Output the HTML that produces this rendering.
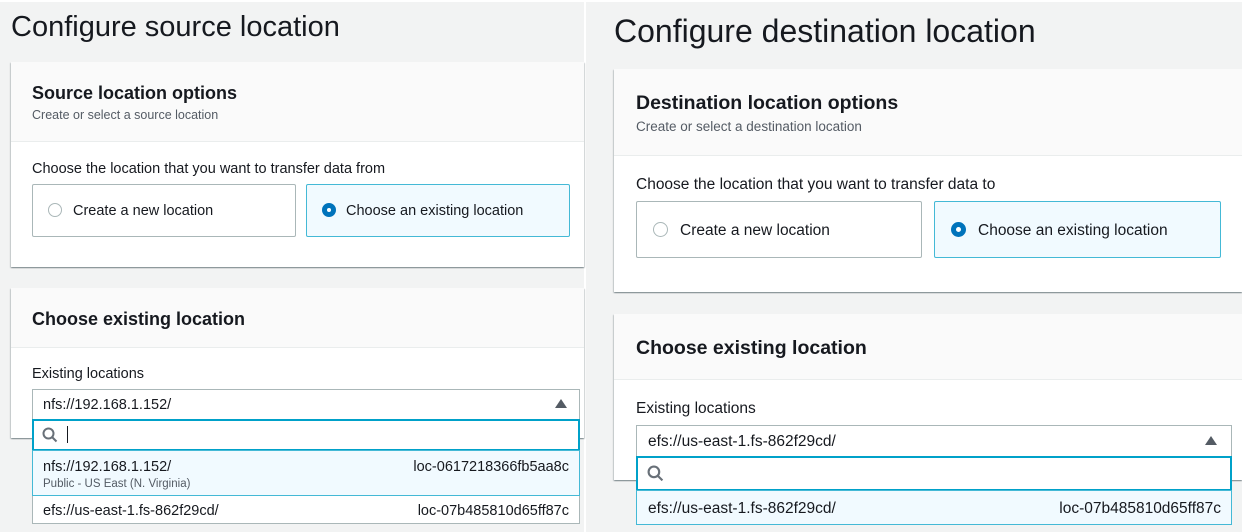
<!DOCTYPE html>
<html><head><style>
*{box-sizing:border-box;margin:0;padding:0}
body{width:1242px;height:532px;background:#fff;position:relative;overflow:hidden;font-family:"Liberation Sans",sans-serif;color:#16191f}
.a{position:absolute;white-space:nowrap}
.bg{background:#f2f3f3}
.card{position:absolute;background:#fff;box-shadow:0 1px 1px 0 rgba(0,28,36,.3),1px 1px 1px 0 rgba(0,28,36,.15),-1px 1px 1px 0 rgba(0,28,36,.15)}
.hd{position:absolute;left:0;right:0;top:0;background:#fafafa;border-bottom:1px solid #eaeded}
.rb{position:absolute;border:1px solid #aab7b8;border-radius:2px;background:#fff}
.rb.sel{border-color:#44b9d6;background:#f1faff}
.rd{position:absolute;border:1px solid #aab7b8;border-radius:50%;background:#fff}
.rd.on{border:5px solid #0073bb}
.box{position:absolute;border:1px solid #aab7b8;background:#fff}
.srch{position:absolute;border:2px solid #00a1c9;background:#fff}
.opt{position:absolute;border:1px solid #aab7b8;background:#fff}
.opt.hi{background:#f1faff;border:1px solid #44b9d6}
.tri{position:absolute;width:0;height:0;border-left:6px solid transparent;border-right:6px solid transparent;border-bottom:9px solid #545b64}
</style></head><body>
<div class="a bg" style="left:0;top:2px;width:584px;height:530px"></div>
<div class="a" style="left:11px;top:11px;font-size:29px;">Configure source location</div>
<div class="card" style="left:11px;top:62px;width:573px;height:205px">
  <div class="hd" style="height:80px"></div>
  <div class="a" style="left:21px;top:21px;font-size:18px;font-weight:bold">Source location options</div>
  <div class="a" style="left:21px;top:46px;font-size:12.5px;color:#545b64">Create or select a source location</div>
  <div class="a" style="left:21px;top:99px;font-size:14.5px">Choose the location that you want to transfer data from</div>
  <div class="rb" style="left:21px;top:122px;width:264px;height:53px"></div>
  <div class="rd" style="left:37px;top:141px;width:14px;height:14px"></div>
  <div class="a" style="left:62px;top:141px;font-size:14.5px">Create a new location</div>
  <div class="rb sel" style="left:295px;top:122px;width:264px;height:53px"></div>
  <div class="rd on" style="left:311px;top:141px;width:14px;height:14px"></div>
  <div class="a" style="left:335px;top:141px;font-size:14.5px">Choose an existing location</div>
</div>
<div class="card" style="left:11px;top:288px;width:573px;height:150px">
  <div class="hd" style="height:60px"></div>
  <div class="a" style="left:21px;top:21px;font-size:18px;font-weight:bold">Choose existing location</div>
  <div class="a" style="left:21px;top:78px;font-size:14.5px">Existing locations</div>
</div>
<div class="box" style="left:32px;top:389px;width:548px;height:31px"></div>
<div class="a" style="left:43px;top:397px;font-size:14.5px">nfs://192.168.1.152/</div>
<div class="tri" style="left:555px;top:399px"></div>
<div class="srch" style="left:32px;top:419px;width:548px;height:32px"></div>
<svg class="a" style="left:42px;top:427px" width="16" height="16" viewBox="0 0 16 16"><circle cx="6.5" cy="6.5" r="5" fill="none" stroke="#687078" stroke-width="2"/><path d="M10 10l4.5 4.5" stroke="#687078" stroke-width="2"/></svg>
<div class="a" style="left:67px;top:426px;width:1px;height:17px;background:#16191f"></div>
<div class="opt hi" style="left:32px;top:450px;width:548px;height:46px"></div>
<div class="a" style="left:43px;top:459px;font-size:14.5px">nfs://192.168.1.152/</div>
<div class="a" style="left:43px;top:478px;font-size:11.5px;color:#545b64">Public - US East (N. Virginia)</div>
<div class="a" style="right:673px;top:459px;font-size:14.5px">loc-0617218366fb5aa8c</div>
<div class="opt" style="left:32px;top:496px;width:548px;height:28px;border-top:none"></div>
<div class="a" style="left:43px;top:503px;font-size:14.5px">efs://us-east-1.fs-862f29cd/</div>
<div class="a" style="right:673px;top:503px;font-size:14.5px">loc-07b485810d65ff87c</div>

<div class="a bg" style="left:586px;top:2px;width:656px;height:530px"></div>
<div class="a" style="left:614px;top:13px;font-size:32px;">Configure destination location</div>
<div class="card" style="left:614px;top:69px;width:628px;height:223px">
  <div class="hd" style="height:87px"></div>
  <div class="a" style="left:22px;top:23px;font-size:19.5px;font-weight:bold">Destination location options</div>
  <div class="a" style="left:22px;top:50px;font-size:13.5px;color:#545b64">Create or select a destination location</div>
  <div class="a" style="left:22px;top:107px;font-size:15.5px">Choose the location that you want to transfer data to</div>
  <div class="rb" style="left:22px;top:132px;width:286px;height:57px"></div>
  <div class="rd" style="left:39px;top:153px;width:15px;height:15px"></div>
  <div class="a" style="left:66px;top:153px;font-size:15.5px">Create a new location</div>
  <div class="rb sel" style="left:320px;top:132px;width:287px;height:57px"></div>
  <div class="rd on" style="left:337px;top:153px;width:15px;height:15px"></div>
  <div class="a" style="left:364px;top:153px;font-size:15.5px">Choose an existing location</div>
</div>
<div class="card" style="left:614px;top:314px;width:628px;height:166px">
  <div class="hd" style="height:66px"></div>
  <div class="a" style="left:22px;top:23px;font-size:19.5px;font-weight:bold">Choose existing location</div>
  <div class="a" style="left:22px;top:86px;font-size:15.5px">Existing locations</div>
</div>
<div class="box" style="left:636px;top:425px;width:596px;height:32px"></div>
<div class="a" style="left:648px;top:433px;font-size:15.5px">efs://us-east-1.fs-862f29cd/</div>
<div class="tri" style="left:1205px;top:436px"></div>
<div class="srch" style="left:636px;top:456px;width:596px;height:35px"></div>
<svg class="a" style="left:647px;top:465px" width="17" height="17" viewBox="0 0 16 16"><circle cx="6.5" cy="6.5" r="5" fill="none" stroke="#687078" stroke-width="2"/><path d="M10 10l4.5 4.5" stroke="#687078" stroke-width="2"/></svg>
<div class="opt hi" style="left:636px;top:490px;width:596px;height:35px"></div>
<div class="a" style="left:648px;top:500px;font-size:15.5px">efs://us-east-1.fs-862f29cd/</div>
<div class="a" style="right:21px;top:500px;font-size:15.5px">loc-07b485810d65ff87c</div>
</body></html>
